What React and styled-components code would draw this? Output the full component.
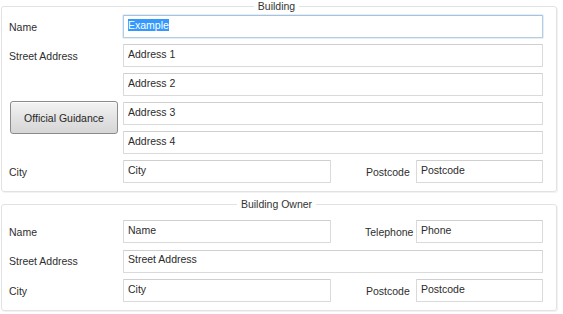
import React from 'react';
import styled, { createGlobalStyle } from 'styled-components';

const GlobalStyle = createGlobalStyle`
  html, body {
    margin: 0;
    padding: 0;
    background: #ffffff;
  }
  body {
    font-family: 'Liberation Sans', Arial, sans-serif;
    font-size: 10.5px;
    color: #2b2b2b;
  }
  ::selection {
    background: #3399ff;
    color: #ffffff;
  }
`;

const Page = styled.div`
  width: 563px;
  height: 314px;
  box-sizing: border-box;
  padding: 0 6px 0 1px;
  display: flex;
  flex-direction: column;
  gap: 6px;
`;

const Group = styled.fieldset`
  margin: 0;
  padding: ${(p) => p.$top || 3}px 12px ${(p) => p.$bottom || 8}px 7px;
  border: 1px solid #e2e2e2;
  border-radius: 3px;
  box-shadow: 1px 1px 0 #f2f2f2;
`;

const Legend = styled.legend`
  margin: 0 auto;
  padding: 0 4px;
  line-height: 12px;
  color: #333;
`;

const FormGrid = styled.div`
  display: grid;
  grid-template-columns: 114px 208px 85px 127px;
  grid-auto-rows: 23px;
  row-gap: ${(p) => p.$gap || 6}px;
`;

const Label = styled.label`
  display: flex;
  align-items: center;
  padding-left: ${(p) => p.$indent || 0}px;
  white-space: nowrap;
  color: #2e2e2e;
`;

const Input = styled.input`
  grid-column: ${(p) => (p.$wide ? '2 / 5' : 'auto')};
  box-sizing: border-box;
  width: 100%;
  height: 23px;
  margin: 0;
  padding: 0 0 4px 4px;
  font: inherit;
  color: #2b2b2b;
  background: #fff;
  border: 1px solid ${(p) => (p.$focus ? '#b5cde3' : '#dadada')};
  border-top-color: ${(p) => (p.$focus ? '#a8c2db' : '#cfcfcf')};
  border-radius: 1px;
  outline: none;
  box-shadow: ${(p) => (p.$focus ? '0 0 0 1px #e4eef7' : 'none')};
`;

const Guidance = styled.button`
  grid-row: span 2;
  align-self: start;
  width: 108px;
  height: 33px;
  margin: -1px 0 0 1px;
  font: inherit;
  color: #262626;
  border: 1px solid #8a8a8a;
  border-radius: 3px;
  background: linear-gradient(#f4f4f4, #e3e3e3 50%, #d6d6d6);
  box-shadow: inset 0 1px 0 #fdfdfd;
`;

const Empty = styled.div``;

export default function App() {
  const nameRef = React.useRef(null);

  React.useEffect(() => {
    if (nameRef.current) {
      nameRef.current.focus();
      nameRef.current.select();
    }
  }, []);

  return (
    <>
      <GlobalStyle />
      <Page>
        <Group>
          <Legend>Building</Legend>
          <FormGrid>
            <Label>Name</Label>
            <Input $wide $focus ref={nameRef} defaultValue="Example" />

            <Label>Street Address</Label>
            <Input $wide defaultValue="Address 1" />

            <Empty />
            <Input $wide defaultValue="Address 2" />

            <Guidance>Official Guidance</Guidance>
            <Input $wide defaultValue="Address 3" />
            <Input $wide defaultValue="Address 4" />

            <Label>City</Label>
            <Input defaultValue="City" />
            <Label $indent={35}>Postcode</Label>
            <Input defaultValue="Postcode" />
          </FormGrid>
        </Group>

        <Group $top={10} $bottom={8}>
          <Legend>Building Owner</Legend>
          <FormGrid $gap={6.5}>
            <Label>Name</Label>
            <Input defaultValue="Name" />
            <Label $indent={34}>Telephone</Label>
            <Input defaultValue="Phone" />

            <Label>Street Address</Label>
            <Input $wide defaultValue="Street Address" />

            <Label>City</Label>
            <Input defaultValue="City" />
            <Label $indent={35}>Postcode</Label>
            <Input defaultValue="Postcode" />
          </FormGrid>
        </Group>
      </Page>
    </>
  );
}
